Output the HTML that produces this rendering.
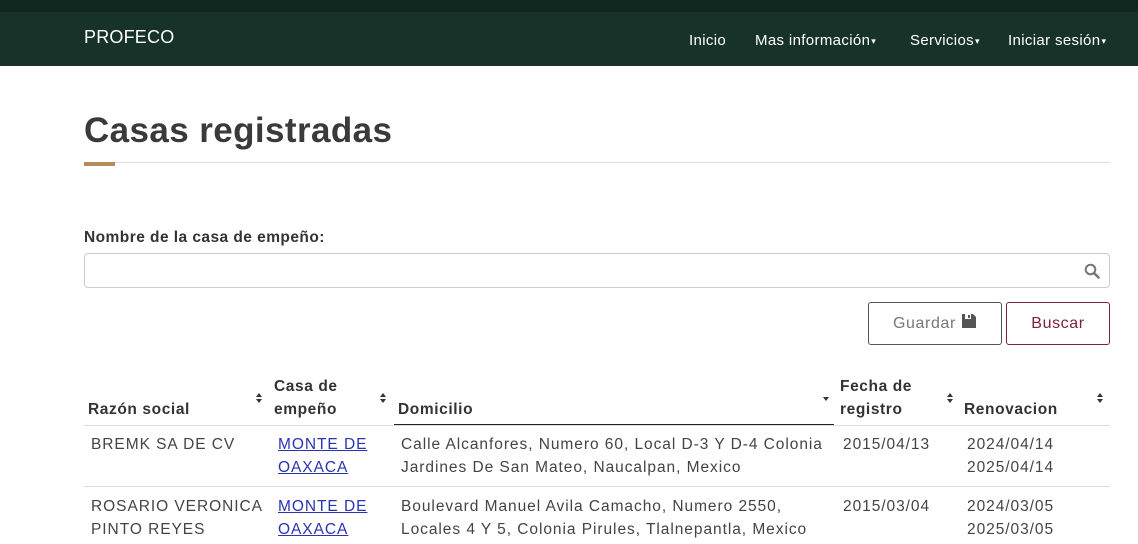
<!DOCTYPE html>
<html><head><meta charset="utf-8"><style>
*{box-sizing:border-box;margin:0;padding:0}
body{width:1138px;height:544px;overflow:hidden;background:#fff;font-family:"Liberation Sans",sans-serif;color:#333;position:relative}
.top{position:absolute;left:0;top:0;width:1138px;height:12px;background:#10271f}
.nav{position:absolute;left:0;top:12px;width:1138px;height:54px;background:#163229;color:#fff}
.brand{position:absolute;left:84px;top:15px;font-size:18px;letter-spacing:0.2px}
.menu{position:absolute;top:20px;font-size:15px;letter-spacing:0.35px;white-space:nowrap}
.car{font-size:9px;vertical-align:middle;margin-left:1px}
h1{position:absolute;left:84px;top:111px;font-size:35px;font-weight:bold;color:#3a3a3a;letter-spacing:0.4px}
.hr{position:absolute;left:84px;top:162px;width:1026px;height:1px;background:#ddd}
.acc{position:absolute;left:84px;top:162px;width:31px;height:4px;background:#b38e5d}
.lbl{position:absolute;left:84px;top:229px;font-size:15.5px;font-weight:bold;color:#333;letter-spacing:0.45px}
.inp{position:absolute;left:84px;top:253px;width:1026px;height:35px;border:1px solid #ccc;border-radius:4px}
.btn{position:absolute;top:302px;height:43px;border:1px solid #555;border-radius:3px;font-size:16px;text-align:center;line-height:41px;letter-spacing:0.6px}
.th{position:absolute;font-size:15.5px;font-weight:bold;color:#333;line-height:23px;letter-spacing:0.6px;white-space:nowrap}
.s{position:absolute;width:6px;height:10px}
.td{position:absolute;font-size:15.5px;color:#444;line-height:23px;letter-spacing:0.95px;white-space:nowrap}
a{color:#2a33b3;text-decoration:underline}
.line{position:absolute;left:84px;width:1026px;height:1px;background:#ddd}
</style></head><body>
<div class="top"></div>
<div class="nav">
<div class="brand">PROFECO</div>
<div class="menu" style="left:689px">Inicio</div>
<div class="menu" style="left:755px">Mas información<span class="car">▾</span></div>
<div class="menu" style="left:910px">Servicios<span class="car">▾</span></div>
<div class="menu" style="left:1008px">Iniciar sesión<span class="car">▾</span></div>
</div>
<h1>Casas registradas</h1>
<div class="hr"></div><div class="acc"></div>
<div class="lbl">Nombre de la casa de empeño:</div>
<div class="inp"><svg style="position:absolute;right:9px;top:9px" width="16" height="16" viewBox="0 0 16 16"><circle cx="6.5" cy="6.5" r="4.8" fill="none" stroke="#777" stroke-width="2"/><path d="M10 10L14.5 14.5" stroke="#777" stroke-width="2.6" stroke-linecap="round"/></svg></div>
<div class="btn" style="left:868px;width:134px;color:#777">Guardar <svg width="16" height="16" viewBox="0 0 16 16" style="vertical-align:-1px"><path d="M1 1h11l3 3v11H1z" fill="#555"/><rect x="4" y="1" width="6" height="5" fill="#fff"/><rect x="7" y="2" width="2" height="3" fill="#555"/></svg></div>
<div class="btn" style="left:1006px;width:104px;border-color:#7b2144;color:#7b2144">Buscar</div>
<div class="th" style="left:88px;top:398px">Razón social</div><svg class="s" style="left:256px;top:393px" viewBox="0 0 6 10"><path d="M0 4L3 0L6 4ZM0 6L3 10L6 6Z" fill="#333"/></svg>
<div class="th" style="left:274px;top:375px">Casa de<br>empeño</div><svg class="s" style="left:380px;top:393px" viewBox="0 0 6 10"><path d="M0 4L3 0L6 4ZM0 6L3 10L6 6Z" fill="#333"/></svg>
<div class="th" style="left:398px;top:398px">Domicilio</div><svg class="s" style="left:823px;top:393px" viewBox="0 0 6 10"><path d="M0 4L3 8L6 4Z" fill="#333"/></svg>
<div style="position:absolute;left:394px;top:424px;width:440px;height:2px;background:#222"></div>
<div class="th" style="left:840px;top:375px">Fecha de<br>registro</div><svg class="s" style="left:947px;top:393px" viewBox="0 0 6 10"><path d="M0 4L3 0L6 4ZM0 6L3 10L6 6Z" fill="#333"/></svg>
<div class="th" style="left:964px;top:398px">Renovacion</div><svg class="s" style="left:1097px;top:393px" viewBox="0 0 6 10"><path d="M0 4L3 0L6 4ZM0 6L3 10L6 6Z" fill="#333"/></svg>
<div class="line" style="top:425px"></div>
<div class="td" style="left:91px;top:433px">BREMK SA DE CV</div>
<div class="td" style="left:278px;top:433px"><a>MONTE DE<br>OAXACA</a></div>
<div class="td" style="left:401px;top:433px">Calle Alcanfores, Numero 60, Local D-3 Y D-4 Colonia<br>Jardines De San Mateo, Naucalpan, Mexico</div>
<div class="td" style="left:843px;top:433px">2015/04/13</div>
<div class="td" style="left:967px;top:433px">2024/04/14<br>2025/04/14</div>
<div class="line" style="top:486px"></div>
<div class="td" style="left:91px;top:495px">ROSARIO VERONICA<br>PINTO REYES</div>
<div class="td" style="left:278px;top:495px"><a>MONTE DE<br>OAXACA</a></div>
<div class="td" style="left:401px;top:495px">Boulevard Manuel Avila Camacho, Numero 2550,<br>Locales 4 Y 5, Colonia Pirules, Tlalnepantla, Mexico</div>
<div class="td" style="left:843px;top:495px">2015/03/04</div>
<div class="td" style="left:967px;top:495px">2024/03/05<br>2025/03/05</div>
</body></html>
